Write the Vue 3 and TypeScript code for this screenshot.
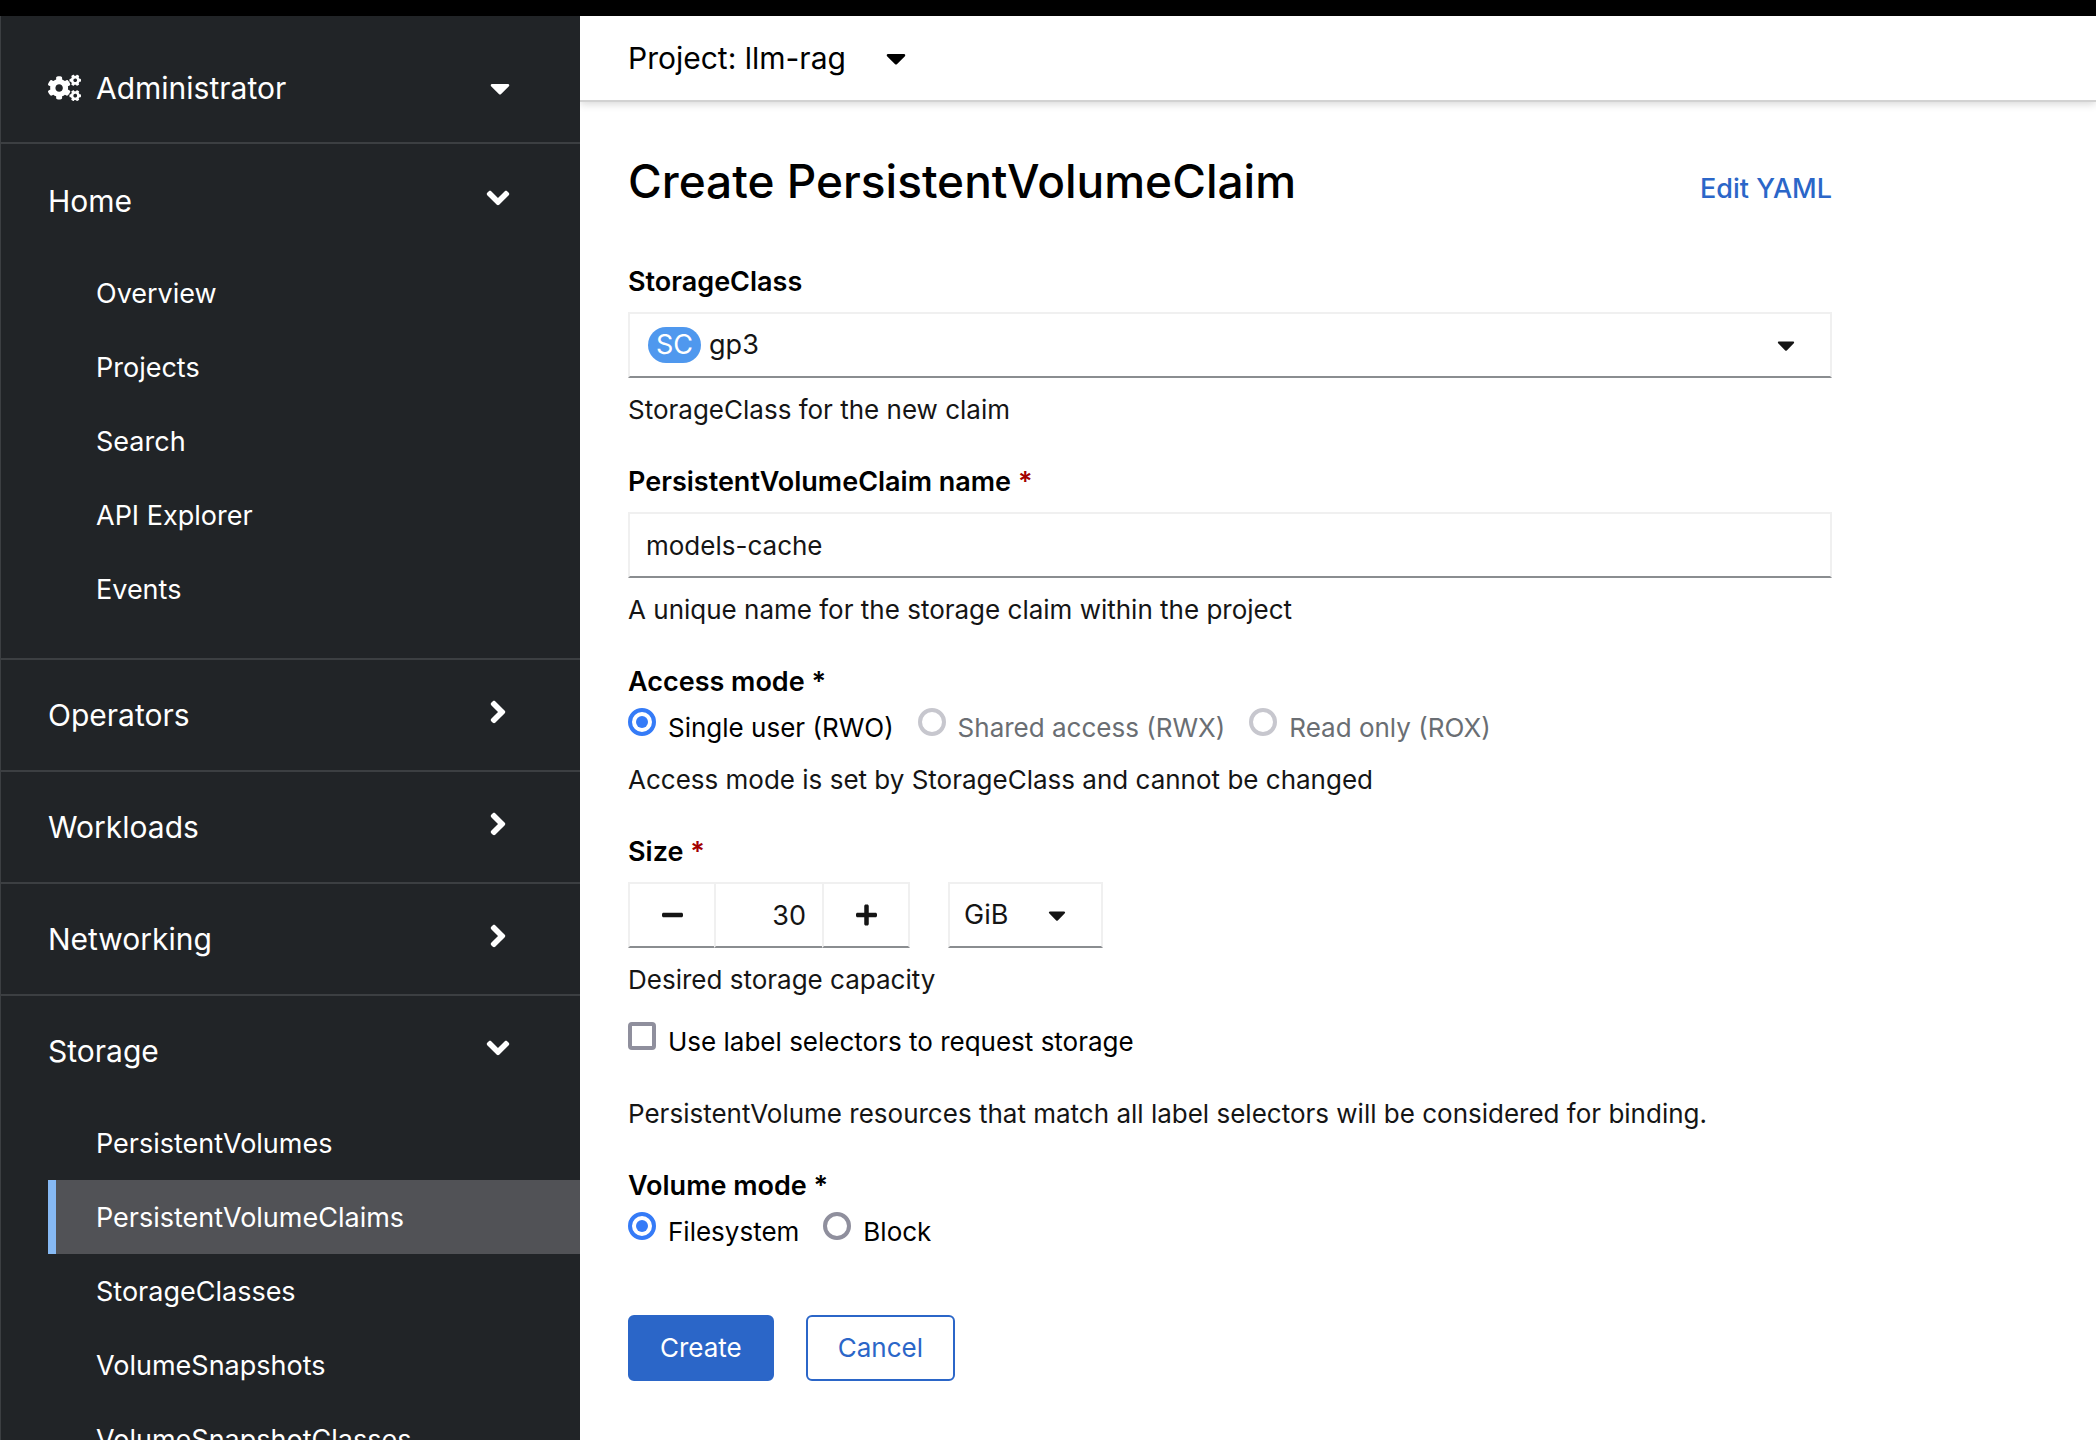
<script setup lang="ts">
import { ref } from 'vue'

interface NavSection {
  title: string
  open: boolean
  items: string[]
}

const sections = ref<NavSection[]>([
  { title: 'Home', open: true, items: ['Overview', 'Projects', 'Search', 'API Explorer', 'Events'] },
  { title: 'Operators', open: false, items: [] },
  { title: 'Workloads', open: false, items: [] },
  { title: 'Networking', open: false, items: [] },
  {
    title: 'Storage',
    open: true,
    items: ['PersistentVolumes', 'PersistentVolumeClaims', 'StorageClasses', 'VolumeSnapshots', 'VolumeSnapshotClasses'],
  },
])
const current = 'PersistentVolumeClaims'

const accessModes = [
  { value: 'rwo', label: 'Single user (RWO)', disabled: false },
  { value: 'rwx', label: 'Shared access (RWX)', disabled: true },
  { value: 'rox', label: 'Read only (ROX)', disabled: true },
]
const volumeModes = ['Filesystem', 'Block']

const storageClass = ref('gp3')
const claimName = ref('models-cache')
const accessMode = ref('rwo')
const size = ref(30)
const unit = ref('GiB')
const useSelectors = ref(false)
const volumeMode = ref('Filesystem')

const caretPath =
  'M31.3 192h257.3c17.8 0 26.7 21.5 14.1 34.1L174.1 354.8c-7.8 7.8-20.5 7.8-28.3 0L17.2 226.1C4.6 213.5 13.5 192 31.3 192z'
const angleDown =
  'M143 352.3L7 216.3c-9.4-9.4-9.4-24.6 0-33.9l22.6-22.6c9.4-9.4 24.6-9.4 33.9 0l96.4 96.4 96.4-96.4c9.4-9.4 24.6-9.4 33.9 0l22.6 22.6c9.4 9.4 9.4 24.6 0 33.9l-136 136c-9.2 9.4-24.4 9.4-33.8 0z'
const angleRight =
  'M224.3 273l-136 136c-9.4 9.4-24.6 9.4-33.9 0l-22.6-22.6c-9.4-9.4-9.4-24.6 0-33.9l96.4-96.4-96.4-96.4c-9.4-9.4-9.4-24.6 0-33.9L54.3 103c9.4-9.4 24.6-9.4 33.9 0l136 136c9.5 9.4 9.5 24.6.1 34z'
const smallCog =
  'M512.1 191l-8.2 14.3c-3 5.3-9.4 7.5-15.1 5.4-11.8-4.4-22.6-10.7-32.1-18.6-4.6-3.8-5.8-10.5-2.8-15.7l8.2-14.3c-6.9-8-12.3-17.3-15.9-27.4h-16.5c-6 0-11.2-4.3-12.2-10.3-2-12-2.1-24.6 0-37.1 1-6 6.2-10.4 12.2-10.4h16.5c3.6-10.1 9-19.4 15.9-27.4l-8.2-14.3c-3-5.2-1.9-11.9 2.8-15.7 9.5-7.9 20.4-14.2 32.1-18.6 5.7-2.1 12.1.1 15.1 5.4l8.2 14.3c10.5-1.9 21.2-1.9 31.7 0L552 6.3c3-5.3 9.4-7.5 15.1-5.4 11.8 4.4 22.6 10.7 32.1 18.6 4.6 3.8 5.8 10.5 2.8 15.7l-8.2 14.3c6.9 8 12.3 17.3 15.9 27.4h16.5c6 0 11.2 4.3 12.2 10.3 2 12 2.1 24.6 0 37.1-1 6-6.2 10.4-12.2 10.4h-16.5c-3.6 10.1-9 19.4-15.9 27.4l8.2 14.3c3 5.2 1.9 11.9-2.8 15.7-9.5 7.9-20.4 14.2-32.1 18.6-5.7 2.1-12.1-.1-15.1-5.4l-8.2-14.3c-10.4 1.9-21.2 1.9-31.7 0zm-10.5-58.8c38.5 29.6 82.4-14.3 52.8-52.8-38.5-29.7-82.4 14.3-52.8 52.8z'
const largeCog =
  'M386.3 286.1l33.7 16.8c10.1 5.8 14.5 18.1 10.5 29.1-8.9 24.2-26.4 46.4-42.6 65.8-7.4 8.9-20.2 11.1-30.3 5.3l-29.1-16.8c-16 13.7-34.6 24.6-54.9 31.7v33.6c0 11.6-8.3 21.6-19.7 23.6-24.6 4.2-50.4 4.4-75.9 0-11.5-2-20-11.9-20-23.6V418c-20.3-7.2-38.9-18-54.9-31.7L74 403c-10 5.8-22.9 3.6-30.3-5.3-16.2-19.4-33.3-41.6-42.2-65.7-4-10.9.4-23.2 10.5-29.1l33.3-16.8c-3.9-20.9-3.9-42.4 0-63.4L12 205.8c-10.1-5.8-14.6-18.1-10.5-29 8.9-24.2 26-46.4 42.2-65.8 7.4-8.9 20.2-11.1 30.3-5.3l29.1 16.8c16-13.7 34.6-24.6 54.9-31.7V57.1c0-11.5 8.2-21.5 19.6-23.5 24.6-4.2 50.5-4.4 76-.1 11.5 2 20 11.9 20 23.6v33.6c20.3 7.2 38.9 18 54.9 31.7l29.1-16.8c10-5.8 22.9-3.6 30.3 5.3 16.2 19.4 33.2 41.6 42.1 65.8 4 10.9.1 23.2-10 29.1l-33.7 16.8c3.9 21 3.9 42.5 0 63.5zm-117.6 21.1c59.2-77-28.7-164.9-105.7-105.7-59.2 77 28.7 164.9 105.7 105.7z'
</script>

<template>
  <div class="app">
    <div class="masthead"></div>
    <div class="body">
      <nav class="sidebar" aria-label="Main">
        <button class="perspective" type="button">
          <svg class="cogs" viewBox="0 0 640 512" aria-hidden="true">
            <path :d="smallCog" />
            <path :d="largeCog" />
            <path :d="smallCog" transform="translate(0 299)" />
          </svg>
          <span class="grow">Administrator</span>
          <svg class="caret-lg nav-caret" viewBox="0 0 320 512" aria-hidden="true"><path :d="caretPath" /></svg>
        </button>
        <section v-for="s in sections" :key="s.title" class="section">
          <button class="toggle" type="button" :aria-expanded="s.open" @click="s.open = !s.open">
            <span class="grow">{{ s.title }}</span>
            <svg v-if="s.open" class="angle" viewBox="-96 0 512 512" aria-hidden="true"><path :d="angleDown" /></svg>
            <svg v-else class="angle" viewBox="-128 0 512 512" aria-hidden="true"><path :d="angleRight" /></svg>
          </button>
          <ul v-if="s.open && s.items.length" class="items">
            <li v-for="item in s.items" :key="item">
              <a href="#" class="item" :class="{ current: item === current }">{{ item }}</a>
            </li>
          </ul>
        </section>
      </nav>

      <main class="main">
        <header class="project-bar">
          <button class="project" type="button">
            <span>Project: llm-rag</span>
            <svg class="caret-lg" viewBox="0 0 320 512" aria-hidden="true"><path :d="caretPath" /></svg>
          </button>
        </header>

        <form class="form" @submit.prevent>
          <div class="title-row">
            <h1>Create PersistentVolumeClaim</h1>
            <a href="#" class="yaml">Edit YAML</a>
          </div>

          <div class="field">
            <label class="label" for="storage-class">StorageClass</label>
            <div class="control picker">
              <span class="badge">SC</span>
              <select id="storage-class" v-model="storageClass">
                <option>gp3</option>
              </select>
              <svg class="caret" viewBox="0 0 320 512" aria-hidden="true"><path :d="caretPath" /></svg>
            </div>
            <p class="help">StorageClass for the new claim</p>
          </div>

          <div class="field">
            <label class="label" for="claim-name">PersistentVolumeClaim name <span class="required">*</span></label>
            <input id="claim-name" v-model="claimName" class="control text" type="text" />
            <p class="help">A unique name for the storage claim within the project</p>
          </div>

          <fieldset class="field">
            <legend class="label">Access mode *</legend>
            <div class="choices">
              <label v-for="m in accessModes" :key="m.value" class="choice" :class="{ off: m.disabled }">
                <input v-model="accessMode" type="radio" name="access" :value="m.value" :disabled="m.disabled" />
                <span>{{ m.label }}</span>
              </label>
            </div>
            <p class="help">Access mode is set by StorageClass and cannot be changed</p>
          </fieldset>

          <div class="field">
            <label class="label" for="size">Size <span class="required">*</span></label>
            <div class="size-row">
              <div class="stepper">
                <button class="control step" type="button" aria-label="Decrement" @click="size--">
                  <svg viewBox="0 0 448 512" aria-hidden="true">
                    <path d="M416 208H32c-17.67 0-32 14.33-32 32v32c0 17.67 14.33 32 32 32h384c17.67 0 32-14.33 32-32v-32c0-17.67-14.33-32-32-32z" />
                  </svg>
                </button>
                <input id="size" v-model.number="size" class="control amount" type="text" inputmode="numeric" />
                <button class="control step" type="button" aria-label="Increment" @click="size++">
                  <svg viewBox="0 0 448 512" aria-hidden="true">
                    <path d="M416 208H272V64c0-17.67-14.33-32-32-32h-32c-17.67 0-32 14.33-32 32v144H32c-17.67 0-32 14.33-32 32v32c0 17.67 14.33 32 32 32h144v144c0 17.67 14.33 32 32 32h32c17.67 0 32-14.33 32-32V304h144c17.67 0 32-14.33 32-32v-32c0-17.67-14.33-32-32-32z" />
                  </svg>
                </button>
              </div>
              <div class="control unit">
                <select v-model="unit" aria-label="Unit">
                  <option>GiB</option>
                </select>
                <svg class="caret" viewBox="0 0 320 512" aria-hidden="true"><path :d="caretPath" /></svg>
              </div>
            </div>
            <p class="help">Desired storage capacity</p>
            <div class="selectors">
              <label class="choice">
                <input v-model="useSelectors" type="checkbox" />
                <span>Use label selectors to request storage</span>
              </label>
            </div>
          </div>

          <p class="note">PersistentVolume resources that match all label selectors will be considered for binding.</p>

          <fieldset class="field">
            <legend class="label">Volume mode *</legend>
            <div class="choices">
              <label v-for="m in volumeModes" :key="m" class="choice">
                <input v-model="volumeMode" type="radio" name="volume" :value="m" />
                <span>{{ m }}</span>
              </label>
            </div>
          </fieldset>

          <div class="actions">
            <button class="btn primary" type="submit">Create</button>
            <button class="btn secondary" type="button">Cancel</button>
          </div>
        </form>
      </main>
    </div>
  </div>
</template>

<style>
body {
  margin: 0;
}
</style>

<style scoped>
.app {
  display: flex;
  flex-direction: column;
  height: 100vh;
  background: #fff;
  color: #151515;
  font: 400 26px/44px Inter, 'Liberation Sans', sans-serif;
}
.app *,
.app *::before {
  box-sizing: border-box;
}
button,
input,
select {
  margin: 0;
  padding: 0;
  border: 0;
  border-radius: 0;
  background: none;
  color: inherit;
  font: inherit;
  appearance: none;
}
button,
select,
a {
  cursor: pointer;
}
svg {
  display: block;
  flex: none;
  fill: currentColor;
}
a {
  text-decoration: none;
}
p {
  margin: 0;
}
.grow {
  flex: 1;
}
.masthead {
  flex: none;
  height: 16px;
  background: #000;
}
.body {
  display: flex;
  flex: 1;
  min-height: 0;
}

/* Sidebar */
.sidebar {
  flex: none;
  width: 580px;
  overflow: hidden;
  border-left: 1px solid #3c3f42;
  background: #212427;
  color: #fff;
  font-size: 30px;
}
.perspective,
.toggle {
  display: flex;
  align-items: center;
  width: 100%;
  padding: 0 64px 0 47px;
  text-align: left;
}
.perspective {
  height: 126px;
  padding-top: 18px;
}
.cogs {
  width: 33px;
  height: 28px;
  margin-right: 15px;
}
.nav-caret {
  margin-right: 6px;
}
.caret-lg {
  width: 20px;
  height: 32px;
}
.caret {
  width: 18px;
  height: 28px;
}
.section {
  border-top: 2px solid #3c3f42;
}
.section:first-of-type {
  padding-top: 2px;
}
.toggle {
  height: 110px;
}
.angle {
  width: 36px;
  height: 42px;
  padding-bottom: 6px;
}
.items {
  margin: 0;
  padding: 0 0 32px 47px;
  list-style: none;
}
.item {
  display: flex;
  align-items: center;
  height: 74px;
  padding: 2px 0 0 40px;
  border-left: 8px solid transparent;
  color: #fff;
  font-size: 27px;
}
.item.current {
  border-left-color: #86b9f3;
  background: #515256;
}

/* Project bar */
.main {
  flex: 1;
  min-width: 0;
  overflow: hidden;
}
.project-bar {
  display: flex;
  height: 86px;
  padding: 0 48px;
  border-bottom: 2px solid #d2d2d2;
  box-shadow: 0 2px 8px rgba(3, 3, 3, 0.16);
  color: #000;
  font-size: 30px;
}
.project {
  display: flex;
  align-items: center;
  gap: 40px;
}

/* Form */
.form {
  max-width: 1300px;
  padding: 48px 48px 0;
}
.title-row {
  display: flex;
  align-items: center;
  justify-content: space-between;
  margin-bottom: 48px;
  color: #000;
}
h1 {
  margin: 0;
  font-size: 46px;
  font-weight: 500;
  line-height: 62px;
}
.yaml {
  padding-top: 16px;
  color: #2b66c8;
  font-size: 27px;
  font-weight: 500;
}
.field {
  min-width: 0;
  margin: 0 0 28px;
  padding: 0;
  border: 0;
}
.label {
  display: block;
  padding: 0;
  color: #000;
  font-size: 27px;
  font-weight: 600;
}
.required {
  color: #a30000;
}
.help {
  margin-top: 10px;
}
.control {
  height: 66px;
  border: 2px solid #f0f0f0;
  border-bottom-color: #8a8d90;
  background: #fff;
}
.label + .control,
.size-row {
  margin-top: 8px;
}
.picker,
.unit {
  display: flex;
  align-items: center;
}
.picker,
.unit,
.amount {
  font-size: 27px;
}
.picker {
  padding: 0 35px 0 18px;
}
.picker select {
  flex: 1;
  height: 100%;
}
.badge {
  margin-right: 8px;
  padding: 0 8px;
  border-radius: 18px;
  background: #4f98ee;
  color: #fff;
  line-height: 36px;
}
.text {
  width: 100%;
  padding: 0 16px;
}
.size-row,
.stepper {
  display: flex;
}
.size-row {
  gap: 38px;
}
.step {
  display: flex;
  align-items: center;
  justify-content: center;
  width: 88px;
}
.step svg {
  width: 21px;
  height: 24px;
}
.amount {
  width: 110px;
  margin: 0 -2px;
  padding: 0 16px;
  text-align: right;
}
.unit {
  width: 155px;
  padding: 0 14px;
}
.unit select {
  width: 84px;
  height: 100%;
}
.choices {
  display: flex;
  flex-wrap: wrap;
  gap: 24px;
  margin-top: 2px;
}
.choices + .help {
  margin-top: 8px;
}
.choice {
  display: flex;
  gap: 12px;
  color: #000;
}
.choice.off {
  color: #6a6e73;
}
.choice input {
  flex: none;
  display: grid;
  place-items: center;
  width: 28px;
  height: 28px;
  margin-top: 2px;
  border: 4px solid #8f8f9d;
}
.choice input[type='checkbox'] {
  border-radius: 4px;
}
.choice input[type='checkbox']:checked {
  border-color: #357bf7;
  background: #357bf7;
}
.choice input[type='radio'] {
  border-radius: 50%;
}
.choice input[type='radio']:checked {
  border-color: #357bf7;
}
.choice input[type='radio']:checked::before {
  width: 12px;
  height: 12px;
  border-radius: 50%;
  background: #357bf7;
  content: '';
}
.choice input:disabled {
  border-color: #c7c7ce;
}
.selectors {
  margin-top: 18px;
}
.note {
  margin-bottom: 28px;
}
.actions {
  display: flex;
  gap: 32px;
  padding-top: 33px;
}
.btn {
  height: 66px;
  padding: 0 30px;
  border: 2px solid #2b66c8;
  border-radius: 6px;
  color: #2b66c8;
}
.primary {
  background: #2b66c8;
  color: #fff;
}
</style>
